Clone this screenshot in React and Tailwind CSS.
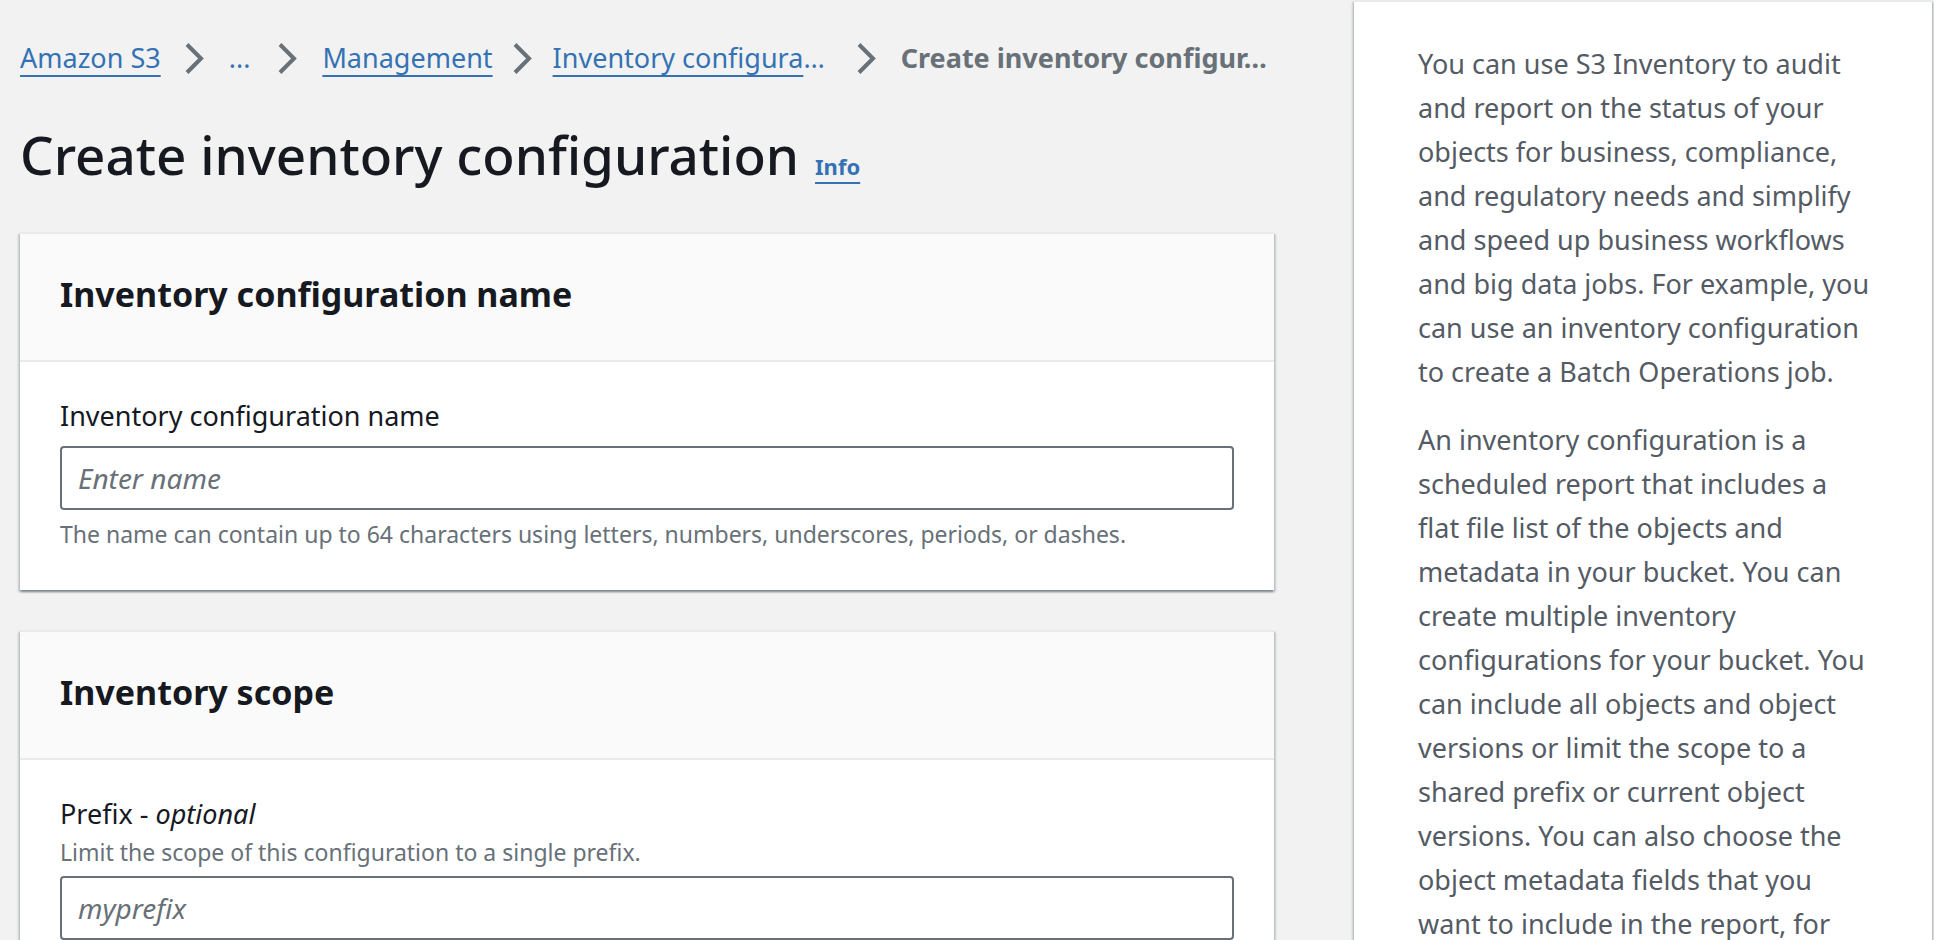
function Chevron() {
  return (
    <svg
      className="h-8 w-5 shrink-0"
      viewBox="0 0 20 32"
      fill="none"
      stroke="#687078"
      strokeWidth="4"
      aria-hidden="true"
    >
      <path d="M2 2.5 L16 16.5 L2 30.5" />
    </svg>
  );
}

const linkLine =
  "underline decoration-2 underline-offset-[7px] [text-decoration-skip-ink:none]";

function Breadcrumbs() {
  return (
    <nav aria-label="Breadcrumbs">
      <ol className="flex items-center text-[27px] leading-[44px] whitespace-nowrap text-[#3472b3]">
        <li className="flex items-center gap-6 pr-6">
          <a href="#s3" className={linkLine}>Amazon S3</a>
          <Chevron />
        </li>
        <li className="flex items-center gap-7 pr-6">
          <button type="button" aria-label="Show path">...</button>
          <Chevron />
        </li>
        <li className="flex items-center gap-5 pr-5">
          <a href="#management" className={linkLine}>Management</a>
          <Chevron />
        </li>
        <li className="flex items-center gap-8 pr-6">
          <a href="#inventory">
            <span className={linkLine}>Inventory configura</span>…
          </a>
          <Chevron />
        </li>
        <li className="font-bold text-[#687078]" aria-current="page">
          Create inventory configur…
        </li>
      </ol>
    </nav>
  );
}

function Card({ title, children }) {
  return (
    <section className="border-t-2 border-[#eaeaea] bg-white shadow-[0_2px_2px_0_rgba(0,28,36,0.3),2px_2px_2px_0_rgba(0,28,36,0.15),-2px_2px_2px_0_rgba(0,28,36,0.15)]">
      <header className="border-b-2 border-[#eaeaea] bg-[#fafafa] px-10 pt-[38px] pb-11">
        <h2 className="text-[34px] leading-[44px] font-bold">{title}</h2>
      </header>
      <div className="flex flex-col px-10 pt-8 pb-10">{children}</div>
    </section>
  );
}

function TextInput({ id, placeholder }) {
  return (
    <input
      id={id}
      type="text"
      placeholder={placeholder}
      aria-describedby={id + "-hint"}
      className="mt-2 h-16 w-full rounded-[4px] border-2 border-[#687078] bg-white px-4 text-[28px] placeholder:text-[#687078] placeholder:italic"
    />
  );
}

export default function App() {
  return (
    <div className="flex h-screen overflow-hidden bg-[#f2f2f2] font-['Noto_Sans',sans-serif] text-[#16191f]">
      <main className="min-w-0 flex-1 pt-9 pr-20 pl-5">
        <Breadcrumbs />
        <div className="mt-10 mb-[42px] flex items-baseline gap-4">
          <h1 className="text-[53px] leading-[70px] font-medium">Create inventory configuration</h1>
          <a href="#info" className="text-[22px] font-bold text-[#3472b3] underline decoration-2 underline-offset-[7px]">
            Info
          </a>
        </div>
        <div className="flex flex-col gap-10">
          <Card title="Inventory configuration name">
            <label htmlFor="config-name" className="text-[27px] leading-[44px]">
              Inventory configuration name
            </label>
            <TextInput id="config-name" placeholder="Enter name" />
            <p id="config-name-hint" className="mt-2 text-[23px] leading-8 text-[#687078]">
              The name can contain up to 64 characters using letters, numbers, underscores, periods, or dashes.
            </p>
          </Card>
          <Card title="Inventory scope">
            <label htmlFor="prefix" className="text-[27px] leading-[44px]">
              Prefix - <i>optional</i>
            </label>
            <p id="prefix-hint" className="text-[23px] leading-8 text-[#687078]">
              Limit the scope of this configuration to a single prefix.
            </p>
            <TextInput id="prefix" placeholder="myprefix" />
          </Card>
        </div>
      </main>
      <aside className="z-10 mr-0.5 flex w-[578px] shrink-0 flex-col gap-6 border-t-2 border-[#eaeaea] bg-white pt-10 pr-[60px] pl-16 text-[27px] leading-[44px] text-[#545b64] shadow-[0_2px_2px_0_rgba(0,28,36,0.3),2px_2px_2px_0_rgba(0,28,36,0.15),-2px_2px_2px_0_rgba(0,28,36,0.15)]">
        <p>
          You can use S3 Inventory to audit and report on the status of your
          objects for business, compliance, and regulatory needs and simplify
          and speed up business workflows and big data jobs. For example, you
          can use an inventory configuration to create a Batch Operations job.
        </p>
        <p>
          An inventory configuration is a scheduled report that includes a flat
          file list of the objects and metadata in your bucket. You can create
          multiple inventory configurations for your bucket. You can include all
          objects and object versions or limit the scope to a shared prefix or
          current object versions. You can also choose the object metadata
          fields that you want to include in the report, for
        </p>
      </aside>
    </div>
  );
}
